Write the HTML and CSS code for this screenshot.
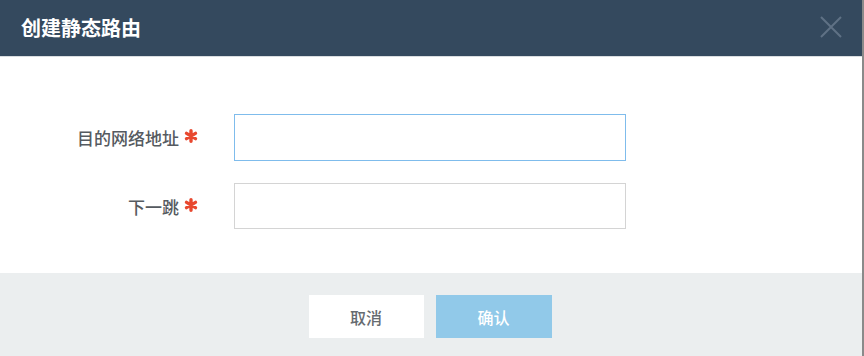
FILE: index.html
```html
<!DOCTYPE html>
<html lang="zh">
<head>
<meta charset="utf-8">
<link rel="stylesheet" href="styles.css">
</head>
<body>
<div class="dialog">
  <div class="header">
    <h1 class="title">创建静态路由</h1>
    <svg class="close" width="22" height="22" viewBox="0 0 22 22"><path d="M1 1L21 21M21 1L1 21" stroke="#5f7185" stroke-width="2" fill="none"/></svg>
  </div>
  <div class="body">
    <div class="row">
      <label class="label">目的网络地址<svg class="star" width="14" height="14" viewBox="0 0 14 14"><g stroke="#e8482f" stroke-width="3.4" stroke-linecap="round"><path d="M7 1.8V12.2M2.5 4.4L11.5 9.6M2.5 9.6L11.5 4.4"/></g></svg></label>
      <div class="input focus"></div>
    </div>
    <div class="row">
      <label class="label">下一跳<svg class="star" width="14" height="14" viewBox="0 0 14 14"><g stroke="#e8482f" stroke-width="3.4" stroke-linecap="round"><path d="M7 1.8V12.2M2.5 4.4L11.5 9.6M2.5 9.6L11.5 4.4"/></g></svg></label>
      <div class="input"></div>
    </div>
  </div>
  <div class="footer">
    <button class="btn cancel">取消</button>
    <button class="btn ok">确认</button>
  </div>
</div>
</body>
</html>
```
FILE: styles.css
```css
html, body { margin: 0; padding: 0; background: #fff; }
body {
  width: 864px; height: 356px; overflow: hidden;
  font-family: "Noto Sans CJK SC", "Noto Sans", sans-serif;
}
.dialog {
  width: 862px; height: 356px;
  border-right: 2px solid #8a8a8a;
  display: flex; flex-direction: column;
}
.header {
  height: 57px; background: #34495e;
  border-bottom: 1px solid #d9dde0;
  display: flex; align-items: center; justify-content: space-between;
  padding: 0 20px 0 21px;
  box-sizing: border-box;
  flex: none;
}
.title {
  margin: 0; color: #fff; font-size: 20px; font-weight: 700; line-height: 1;
}
.close { display: block; margin-top: -2px; }
.body {
  flex: none; height: 216px; box-sizing: border-box;
  padding-top: 57px;
  display: flex; flex-direction: column; gap: 22px;
}
.row { display: flex; align-items: center; }
.label {
  width: 198px; box-sizing: border-box;
  display: flex; align-items: center; justify-content: flex-end;
  font-size: 17px; color: #555a60; font-weight: 500;
  margin-right: 36px;
}
.star { margin-left: 5px; margin-top: -3px; }
.input {
  width: 392px; height: 46px; box-sizing: border-box;
  border: 1.5px solid #d4d4d4; background: #fff;
}
.input.focus { border-color: #7fbcec; height: 47px; }
.footer {
  flex: 1; background: #ebeeef;
  display: flex; justify-content: center; align-items: flex-start;
  padding-top: 22px; gap: 12px;
  padding-right: 2px;
}
.btn {
  width: 115px; height: 43px; border: none; margin: 0;
  font-family: inherit; font-size: 16px; font-weight: 500;
}
.cancel { background: #fff; color: #666b70; }
.ok { background: #91c9e9; color: #fff; width: 116px; }
```
